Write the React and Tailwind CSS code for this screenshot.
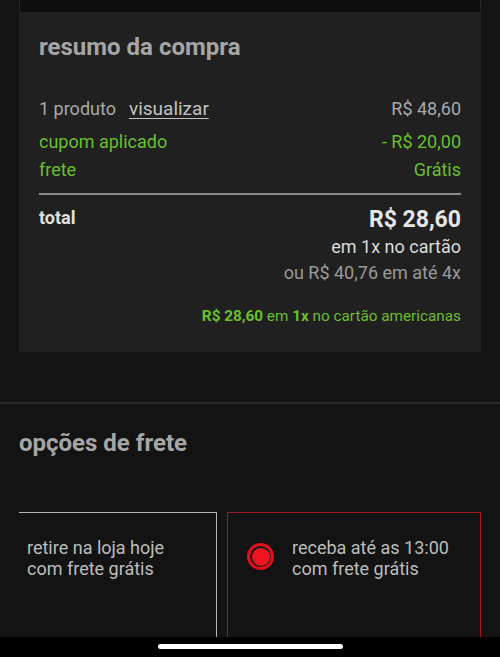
export default function App() {
  return (
    <div className="h-[657px] w-[500px] overflow-hidden bg-[#131313] flex flex-col font-['Roboto',sans-serif]">
      {/* resumo */}
      <div className="px-[19px]">
        <div className="h-[12px] bg-[#0f0f0f] border-x border-[#262626]" />
        <div className="bg-[#202020] px-[20px] pt-[21px] pb-[26px]">
          <h2 className="text-[24px] leading-[28px] font-bold text-[#a6a6a6]">resumo da compra</h2>

          <div className="mt-[33px] flex items-center justify-between h-[28px] text-[18px]">
            <div className="flex items-center gap-[13px]">
              <span className="text-[#a9a9a9]">1 produto</span>
              <span className="text-[19px] text-[#c2c2c2] underline underline-offset-[3px] mt-[3px]">visualizar</span>
            </div>
            <span className="text-[#a9a9a9]">R$ 48,60</span>
          </div>
          <div className="mt-[5px] flex items-center justify-between h-[28px] text-[18px] text-[#6abf2f]">
            <span>cupom aplicado</span>
            <span>- R$ 20,00</span>
          </div>
          <div className="flex items-center justify-between h-[28px] text-[18px] text-[#6abf2f]">
            <span>frete</span>
            <span>Grátis</span>
          </div>

          <div className="mt-[10px] h-[2px] bg-[#8a8a8a]" />

          <div className="mt-[11px] flex justify-between items-start">
            <span className="text-[18px] leading-[24px] font-bold text-[#e0e0e0]">total</span>
            <div className="flex flex-col items-end">
              <span className="text-[23px] leading-[28px] font-bold text-[#e6e6e6]">R$ 28,60</span>
              <span className="text-[18px] leading-[26px] text-[#dcdcdc]">em 1x no cartão</span>
              <span className="text-[18px] leading-[26px] text-[#9a9a9a]">ou R$ 40,76 em até 4x</span>
            </div>
          </div>

          <p className="mt-[20px] text-right text-[15.3px] leading-[20px] text-[#6abf2f]">
            <span className="font-bold">R$ 28,60</span> em <span className="font-bold">1x</span> no cartão americanas
          </p>
        </div>
      </div>

      <div className="h-[50px]" />
      <div className="h-[2px] bg-[#282828]" />

      {/* frete */}
      <div className="flex-1 flex flex-col overflow-hidden">
        <h2 className="pt-[25px] px-[19px] text-[24px] leading-[28px] font-bold text-[#a6a6a6]">opções de frete</h2>

        <div className="mt-[55px] flex-1 flex gap-[10px] pl-[19px] pr-[19px]">
          <div className="w-[198px] border-t border-r border-[#b5b5b5] pl-[8px] pt-[24px]">
            <p className="text-[18px] leading-[21px] text-[#bdbdbd]">retire na loja hoje<br />com frete grátis</p>
          </div>
          <div className="flex-1 border border-b-0 border-[#a11a22] pl-[19px] pt-[24px] flex items-start gap-[18px]">
            <div className="mt-[6px] w-[27px] h-[27px] rounded-full bg-[#e3101b] flex items-center justify-center">
              <div className="w-[21px] h-[21px] rounded-full bg-[#1a1a1a] flex items-center justify-center">
                <div className="w-[18px] h-[18px] rounded-full bg-[#ee1520]" />
              </div>
            </div>
            <p className="text-[18px] leading-[21px] text-[#bdbdbd]">receba até as 13:00<br />com frete grátis</p>
          </div>
        </div>
      </div>

      <div className="h-[20px] bg-black flex justify-center pt-[7px] shrink-0">
        <div className="w-[185px] h-[5px] rounded-full bg-white" />
      </div>
    </div>
  );
}
